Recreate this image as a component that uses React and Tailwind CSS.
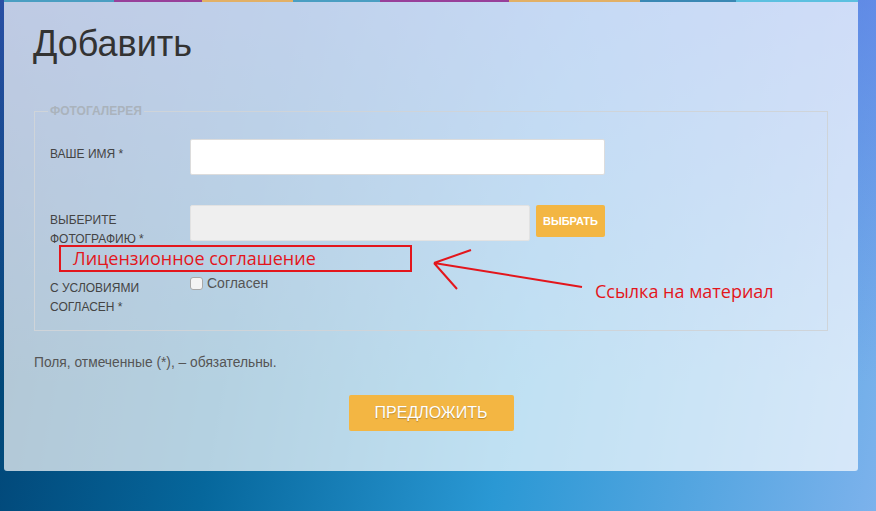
const stripe = [
    ["w-[110px]", "bg-[#4a9ec2]"],
    ["w-[88px]", "bg-[#98409a]"],
    ["w-[91px]", "bg-[#e2b066]"],
    ["w-[87px]", "bg-[#4a9ec2]"],
    ["w-[129px]", "bg-[#98409a]"],
    ["w-[131px]", "bg-[#e2b066]"],
    ["w-[96px]", "bg-[#3a88b4]"],
    ["w-[122px]", "bg-[#5cc0e0]"],
]

const Label = ({ children }) => (
    <div className="w-[140px] shrink-0 pt-[6px] text-[12px] leading-[19px] text-[#444] uppercase">
        {children}
    </div>
)

const App = () => {
    return (
        <div
            className="relative w-[876px] h-[511px] overflow-hidden bg-[linear-gradient(to_bottom,rgba(90,100,230,0.45),rgba(90,110,220,0)_75%),linear-gradient(100deg,#003e6e_0%,#06679c_30%,#2a98d4_60%,#7cb2ec_100%)]"
            style={{ fontFamily: '"Liberation Sans", Arial, sans-serif' }}
        >
            <div className="ml-[4px] w-[854px] h-[471px] bg-white/70 rounded-b-[3px] flex flex-col px-[30px]">
                <div className="flex h-[2px] -mx-[30px]">
                    {stripe.map(([w, c], i) => (
                        <div key={i} className={`${w} ${c} h-full`} />
                    ))}
                </div>
                <h1 className="mt-[22px] text-[36px] leading-[40px] text-[#333] -ml-[1px]">Добавить</h1>

                <fieldset className="mt-[40px] border border-[#cfd4d9] px-[15px] pb-[13px]">
                    <legend className="px-[2px] -ml-[2px] text-[12px] leading-[14px] font-bold text-[#aab3bc]">
                        ФОТОГАЛЕРЕЯ
                    </legend>

                    <div className="flex mt-[21px]">
                        <Label>Ваше имя *</Label>
                        <div className="w-[415px] h-[36px] bg-white border border-[#dcdcdc] rounded-[2px]" />
                    </div>

                    <div className="flex items-start h-[36px] mt-[30px]">
                        <Label>
                            Выберите
                            <br />
                            фотографию *
                        </Label>
                        <div className="w-[340px] h-[36px] bg-[#efefef] border border-[#e2e2e2] rounded-[2px]" />
                        <button className="ml-[6px] w-[69px] h-[32px] bg-[#f3b643] rounded-[2px] text-white text-[11px] font-bold">
                            ВЫБРАТЬ
                        </button>
                    </div>

                    <div className="flex mt-[32px]">
                        <Label>
                            С условиями
                            <br />
                            согласен *
                        </Label>
                        <div className="flex items-center gap-[4px] pt-[2px] h-[18px]">
                            <span className="w-[13px] h-[13px] rounded-[3px] border border-[#a9a9a9] bg-[#f4f4f4]" />
                            <span className="text-[14px] text-[#555]">Согласен</span>
                        </div>
                    </div>
                </fieldset>

                <p className="mt-[22px] text-[13.8px] leading-[20px] text-[#555]">Поля, отмеченные (*), – обязательны.</p>

                <div className="flex justify-center mt-[22px]">
                    <button className="w-[165px] h-[36px] bg-[#f3b643] rounded-[2px] text-white text-[16px] [text-shadow:0_1px_1px_rgba(0,0,0,0.25)]">
                        ПРЕДЛОЖИТЬ
                    </button>
                </div>
            </div>

            {/* annotation */}
            <div
                className="absolute left-[59px] top-[245px] w-[353px] h-[27px] border-2 border-[#e3161c] pl-[12px] text-[18px] leading-[23px] text-[#e3161c]"
                style={{ fontFamily: '"Open Sans", "Noto Sans", sans-serif' }}
            >
                Лицензионное соглашение
            </div>
            <svg className="absolute left-0 top-0" width="876" height="511" fill="none" stroke="#e3161c" strokeWidth="2">
                <path d="M582 287 L434 263 M434 263 L471 250 M434 263 L457 289" />
            </svg>
            <div
                className="absolute left-[595px] top-[280px] text-[18px] leading-[23px] text-[#e3161c]"
                style={{ fontFamily: '"Open Sans", "Noto Sans", sans-serif' }}
            >
                Ссылка на материал
            </div>
        </div>
    )
}

export default App
